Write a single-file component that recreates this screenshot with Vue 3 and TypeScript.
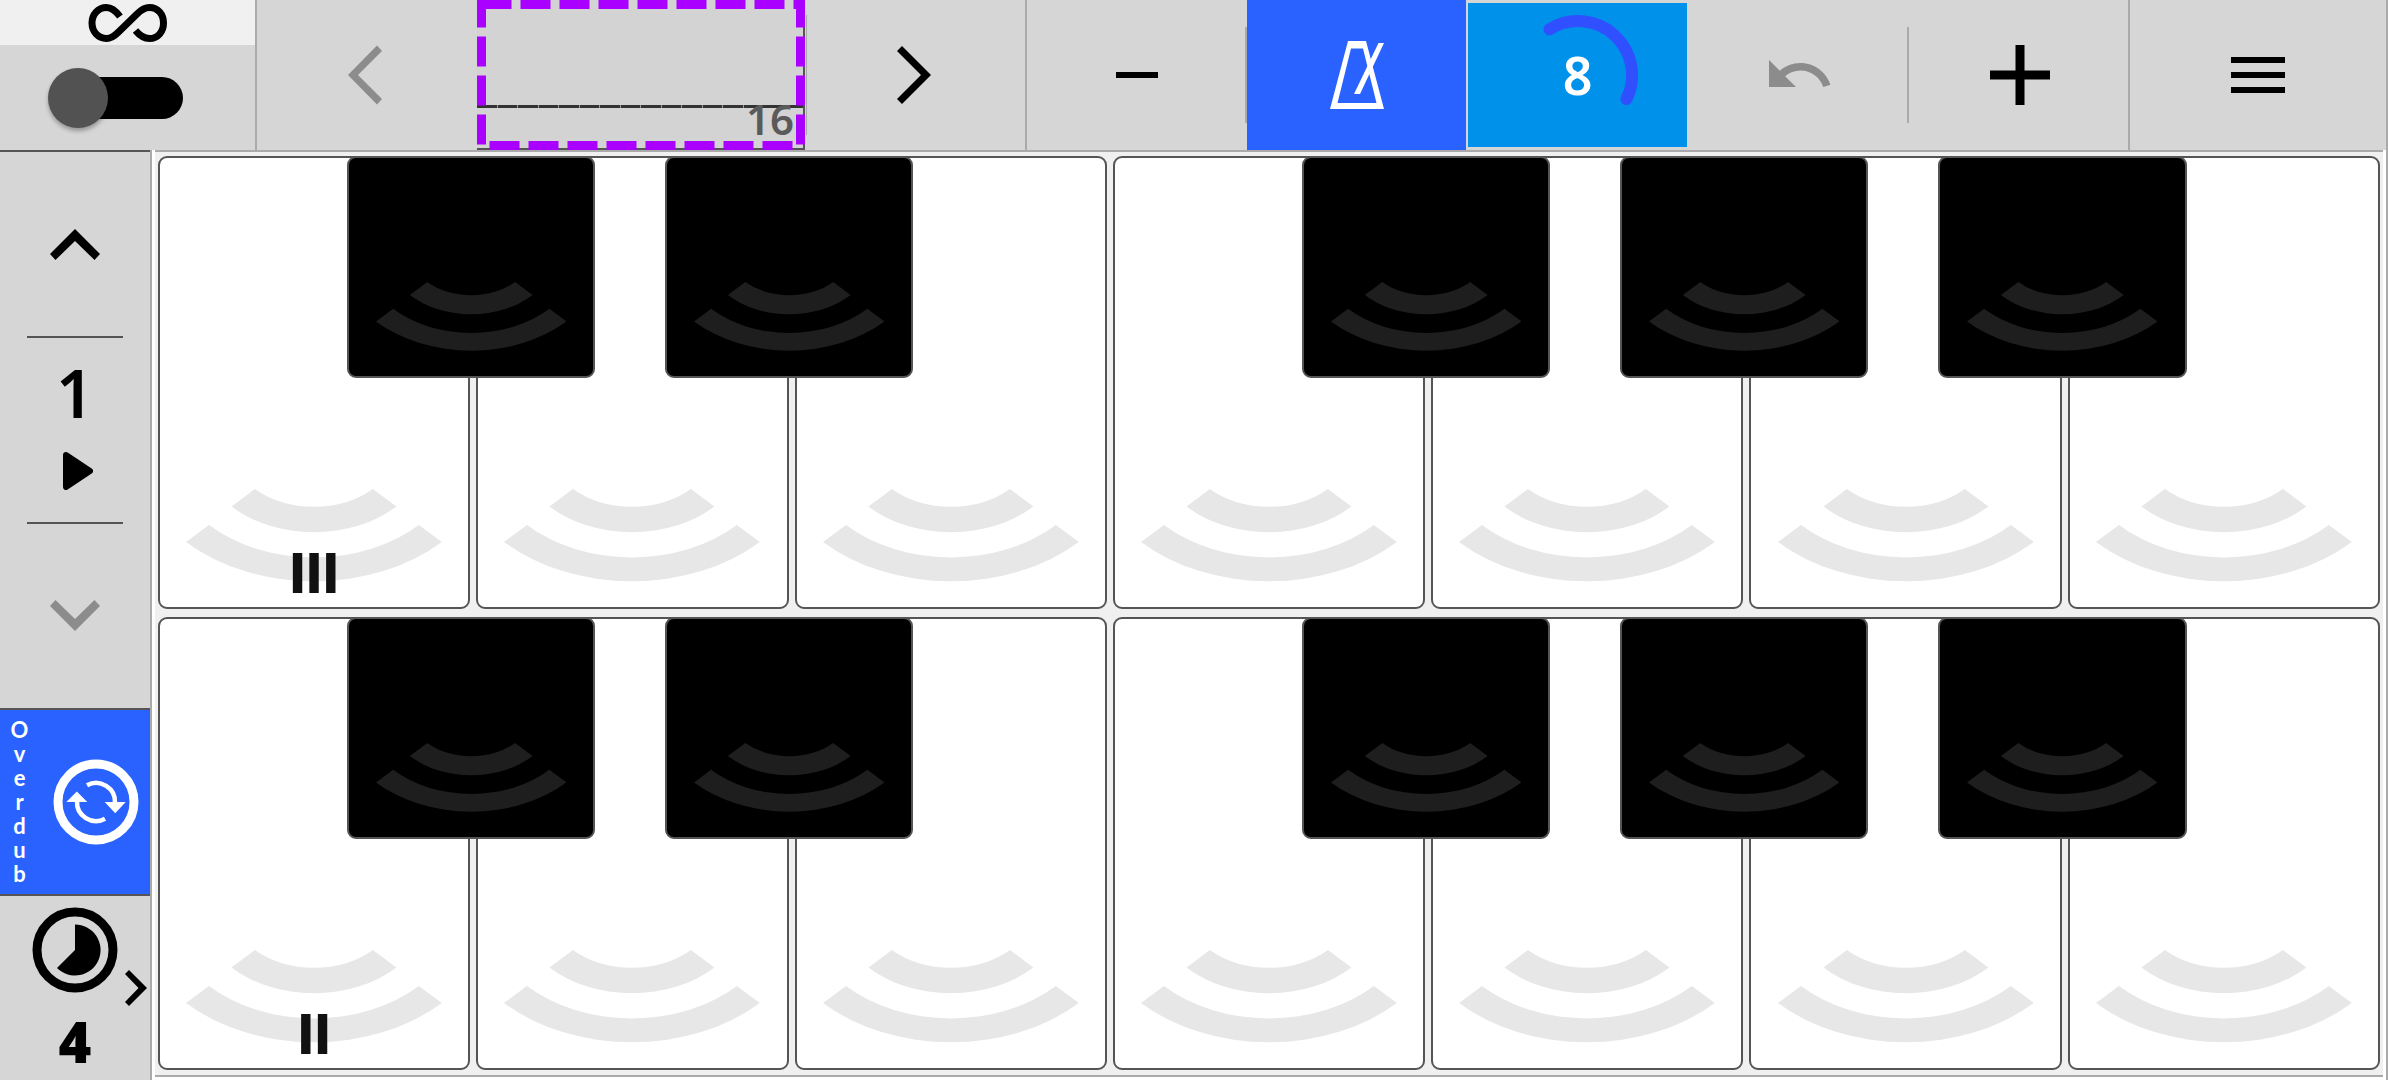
<script setup lang="ts">
import { ref } from 'vue'

interface Key {
  note: string
  sharp: boolean
}

interface Row {
  id: number
  label: string
}

const keys: Key[] = [
  { note: 'C', sharp: true },
  { note: 'D', sharp: true },
  { note: 'E', sharp: false },
  { note: 'F', sharp: true },
  { note: 'G', sharp: true },
  { note: 'A', sharp: true },
  { note: 'B', sharp: false },
]

const rows: Row[] = [
  { id: 2, label: 'III' },
  { id: 1, label: 'II' },
]

const overdub = 'Overdub'
const looping = ref(false)
const page = ref(1)
const steps = ref(16)
const beats = ref(8)
const bars = ref(4)
</script>

<template>
  <div class="app">
    <header class="toolbar">
      <div class="mode">
        <label class="mode-label" for="loop-switch">
          <svg width="80" height="42" viewBox="0 0 80 42" aria-label="Loop">
            <path
              d="M32 14.500 C27.500 8.500 23.500 5.500 18.500 5.500 C10 5.500 4 12.500 4 21 C4 29.500 10 36.500 18.500 36.500 C23 36.500 26 34.500 30 30.500 L49 12 C53 8 57 5.500 61.500 5.500 C70 5.500 75.500 12.500 75.500 21 C75.500 29.500 70 36.500 61.500 36.500 C56 36.500 52 34 47.500 28.500"
              fill="none"
              stroke="#000"
              stroke-width="7"
            />
          </svg>
        </label>
        <div class="mode-switch">
          <input id="loop-switch" v-model="looping" class="switch" type="checkbox" />
        </div>
      </div>

      <button class="tool" type="button" aria-label="Previous">
        <svg width="38" height="60" viewBox="0 0 38 60">
          <path d="M0 30 29 .5 34 6 10 30 34 54 29 59.500z" fill="#8c8c8c" />
        </svg>
      </button>

      <div class="display">
        <div class="timeline"><span class="ticks"></span></div>
        <span class="steps">{{ steps }}</span>
        <svg class="selection" aria-hidden="true">
          <rect x="4.500" y="4.500" />
        </svg>
      </div>

      <button class="tool next" type="button" aria-label="Next">
        <svg width="40" height="60" viewBox="0 0 40 60">
          <path d="M34 30 5 1 0 6 24 30 0 54 5 59z" />
        </svg>
      </button>

      <button class="tool short-rule" type="button" aria-label="Decrease">
        <svg width="72" height="72" viewBox="0 0 24 24"><path d="M5 11h14v2H5z" /></svg>
      </button>

      <button class="tool metronome" type="button" aria-label="Metronome">
        <svg width="54" height="68" viewBox="0 0 54 68">
          <path
            d="M18 0H36L54 68H0zM21 7.500 7.500 62H46.500L33 7.500z"
            fill="#fff"
            fill-rule="evenodd"
          />
          <path d="M48.500 2H54L30 53H24z" fill="#fff" />
        </svg>
      </button>

      <button class="tool beats" type="button" aria-label="Beats">
        <svg class="progress" width="120" height="120" viewBox="0 0 120 120">
          <path
            d="M31.500 14.300A54 54 0 0 1 108.500 84"
            fill="none"
            stroke="#3050ff"
            stroke-width="12"
            stroke-linecap="round"
          />
        </svg>
        <span>{{ beats }}</span>
      </button>

      <button class="tool short-rule" type="button" aria-label="Undo">
        <svg width="72" height="72" viewBox="0 0 24 24">
          <path
            fill="#8c8c8c"
            d="M12.500 8c-2.650 0-5.050.990-6.900 2.600L2 7v9h9l-3.620-3.620c1.390-1.160 3.160-1.880 5.120-1.880 3.540 0 6.550 2.310 7.600 5.500l2.370-.780C21.080 11.030 17.150 8 12.500 8z"
          />
        </svg>
      </button>

      <button class="tool full-rule" type="button" aria-label="Add">
        <svg width="60" height="60" viewBox="0 0 60 60">
          <path d="M25.500 0h9v25.500H60v9H34.500V60h-9V34.500H0v-9h25.500z" />
        </svg>
      </button>

      <button class="tool" type="button" aria-label="Menu">
        <svg width="72" height="72" viewBox="0 0 24 24">
          <path d="M3 18h18v-2H3v2zm0-5h18v-2H3v2zm0-7v2h18V6H3z" />
        </svg>
      </button>
    </header>

    <main class="body">
      <aside class="side">
        <button class="cell boxed" type="button" aria-label="Page up">
          <svg width="50" height="31" viewBox="0 0 50 31">
            <path d="M25 0 50 25 44.500 31 25 12 5.500 31 0 25z" />
          </svg>
        </button>

        <button class="cell ruled pager" type="button">
          <span class="page">{{ page }}</span>
          <svg class="play" width="30" height="38" viewBox="0 0 30 38">
            <path d="M3 3 27 19 3 35z" stroke="#000" stroke-width="6" stroke-linejoin="round" />
          </svg>
        </button>

        <button class="cell ruled" type="button" aria-label="Page down">
          <svg width="50" height="31" viewBox="0 0 50 31">
            <path d="M25 31 50 6 44.500 0 25 19 5.500 0 0 6z" fill="#8c8c8c" />
          </svg>
        </button>

        <button class="cell boxed overdub" type="button" :aria-label="overdub">
          <span class="letters">
            <span v-for="(letter, i) in overdub" :key="i">{{ letter }}</span>
          </span>
          <svg width="86" height="86" viewBox="-43 -43 86 86">
            <circle r="38" fill="none" stroke="#fff" stroke-width="9" />
            <g fill="none" stroke="#fff" stroke-width="4.500">
              <path d="M-9 -16.700A19 19 0 0 1 19 1" />
              <path d="M9 16.700A19 19 0 0 1 -19 -1" />
            </g>
            <path d="M8.700 0H29.700L19.200 11.300z M-8.700 0H-29.700L-19.200 -10.500z" fill="#fff" />
          </svg>
        </button>

        <button class="cell boxed bars" type="button">
          <svg width="86" height="86" viewBox="-43 -43 86 86">
            <circle r="38" fill="none" stroke="#000" stroke-width="9" />
            <path d="M0 0V-25.500A25.500 25.500 0 1 1 -18 18z" />
          </svg>
          <span class="bar-count">{{ bars }}</span>
          <svg class="more" width="22" height="36" viewBox="0 0 22 36">
            <path d="M22 18 4 0 0 4 13.500 18 0 32 4 36z" />
          </svg>
        </button>
      </aside>

      <section class="keyboard">
        <div v-for="row in rows" :key="row.id" class="octave">
          <div v-for="(key, i) in keys" :key="key.note" class="slot">
            <button class="key white" type="button" :aria-label="key.note + row.id">
              <svg class="waves" viewBox="0 0 256 94">
                <path
                  d="M45.500 17.500 69 0A83 60 0 0 0 187 0L210.500 17.500A115 85 0 0 1 45.500 17.500z M0 53 23 36A148 110 0 0 0 233 36L256 53A181 135 0 0 1 0 53z"
                  fill="#e7e7e7"
                />
              </svg>
              <span v-if="i === 0" class="degree">{{ row.label }}</span>
            </button>
            <button
              v-if="key.sharp"
              class="key black"
              type="button"
              :aria-label="key.note + '#' + row.id"
            >
              <svg class="waves" viewBox="0 0 256 94">
                <path
                  d="M45.500 17.500 69 0A83 60 0 0 0 187 0L210.500 17.500A115 85 0 0 1 45.500 17.500z M0 53 23 36A148 110 0 0 0 233 36L256 53A181 135 0 0 1 0 53z"
                  fill="#1e1e1e"
                />
              </svg>
            </button>
          </div>
        </div>
      </section>
    </main>
  </div>
</template>

<style>
body {
  margin: 0;
  background: #fff;
}
</style>

<style scoped>
.app {
  display: flex;
  flex-direction: column;
  box-sizing: border-box;
  min-height: 100vh;
  border-right: 2px solid #aaa;
  font-family: 'Noto Sans', 'Open Sans', sans-serif;
  color: #000;
}

button {
  box-sizing: border-box;
  margin: 0;
  padding: 0;
  border: 0;
  background: none;
  color: inherit;
  font: inherit;
}

svg {
  display: block;
  flex: none;
}

.toolbar {
  display: grid;
  grid-template-columns: 257px 220fr 329fr 221fr 220fr 221fr 220fr 221fr 221fr 256px;
  height: 150px;
  background: #d6d6d6;
}

.mode {
  display: flex;
  flex-direction: column;
  border-right: 2px solid #aaa;
}

.mode-label {
  display: flex;
  align-items: center;
  justify-content: center;
  height: 45px;
  background: #f0f0f0;
}

.mode-switch {
  flex: 1;
  display: flex;
  align-items: center;
  padding-left: 48px;
}

.switch {
  appearance: none;
  position: relative;
  display: flex;
  align-items: center;
  width: 135px;
  height: 60px;
  margin: 0;
}

.switch::before {
  content: '';
  position: absolute;
  inset: 9px 0 9px 24px;
  border-radius: 21px;
  background: #000;
}

.switch::after {
  content: '';
  position: relative;
  width: 60px;
  height: 60px;
  border-radius: 50%;
  background: #525252;
  box-shadow: 0 3px 4px rgba(0, 0, 0, 0.3);
}

.switch:checked::after {
  margin-left: auto;
}

.tool {
  display: flex;
  align-items: center;
  justify-content: center;
}

.short-rule {
  background: linear-gradient(#aaa, #aaa) right center / 2px 96px no-repeat;
}

.full-rule {
  background: linear-gradient(#aaa, #aaa) right center / 2px 100% no-repeat;
}

.next {
  background:
    linear-gradient(#aaa, #aaa) right center / 2px 100% no-repeat,
    linear-gradient(#aaa, #aaa) left center / 1px 120px no-repeat;
}

.display {
  position: relative;
  display: flex;
  flex-direction: column;
  box-sizing: border-box;
  margin-right: 1px;
  padding-top: 105px;
  border-right: 2px solid #555;
  border-bottom: 2px solid #555;
  background: #d3d3d3;
}

.timeline {
  height: 3px;
  background: #333;
}

.ticks {
  display: block;
  width: 82%;
  height: 3px;
  background: repeating-linear-gradient(
    90deg,
    transparent 0,
    transparent calc(100% / 13 - 1px),
    #999 calc(100% / 13 - 1px),
    #999 calc(100% / 13)
  );
}

.steps {
  align-self: flex-end;
  margin: -10px 9px 0 0;
  font-size: 42px;
  font-weight: 600;
  line-height: 42px;
  color: #5a5a5a;
}

.selection {
  position: absolute;
  top: 0;
  left: 0;
  width: calc(100% + 2px);
  height: 150px;
}

.selection rect {
  width: calc(100% - 9px);
  height: 141px;
  fill: none;
  stroke: #a0f;
  stroke-width: 9px;
  stroke-dasharray: 30 9;
}

.metronome {
  margin-right: 2px;
  background: #2962ff;
}

.beats {
  position: relative;
  margin: 3px 1px 3px 0;
  background: #0091ea;
  color: #fff;
  font-size: 52px;
  font-weight: 600;
  line-height: 52px;
}

.progress {
  position: absolute;
  inset: 0;
  margin: auto;
}

.body {
  flex: 1;
  display: grid;
  grid-template-columns: 152px 1fr;
}

.side {
  display: grid;
  grid-template-rows: repeat(5, 1fr);
  border-right: 2px solid #aaa;
  background: #d6d6d6;
}

.cell {
  display: flex;
  align-items: center;
  justify-content: center;
}

.boxed {
  border-top: 2px solid #555;
}

.ruled {
  background: linear-gradient(#555, #555) center top / 96px 2px no-repeat;
}

.pager {
  flex-direction: column;
  gap: 36px;
}

.page {
  font-size: 66px;
  font-weight: 600;
  line-height: 48px;
}

.play {
  margin-left: 6px;
}

.overdub {
  gap: 14px;
  justify-content: flex-start;
  background: #2962ff;
  color: #fff;
}

.letters {
  display: flex;
  flex-direction: column;
  width: 39px;
  font-family: Lato, 'Open Sans', sans-serif;
  font-size: 22px;
  font-weight: 700;
  line-height: 24px;
  text-align: center;
}

.bars {
  position: relative;
  flex-direction: column;
  justify-content: flex-start;
  gap: 20px;
  padding-top: 11px;
}

.bar-count {
  font-size: 56px;
  font-weight: 900;
  line-height: 56px;
}

.more {
  position: absolute;
  top: 74px;
  right: 3px;
}

.keyboard {
  display: grid;
  grid-template-rows: 1fr 1fr;
  gap: 8px;
  margin: 0 3px 3px;
  padding: 4px 3px 5px;
  border-top: 2px solid #aaa;
  border-bottom: 2px solid #aaa;
  background: #f0f0f0;
}

.octave {
  display: grid;
  grid-template-columns: repeat(7, 1fr);
  gap: 6px;
}

.slot {
  position: relative;
  display: flex;
}

.key {
  display: flex;
  align-items: flex-end;
  justify-content: center;
  padding-bottom: 24px;
  border: 2px solid #555;
  border-radius: 9px;
}

.white {
  position: relative;
  flex: 1;
  background: #fff;
}

.white .waves {
  width: 83%;
}

.black {
  position: absolute;
  z-index: 1;
  top: 0;
  left: 60.5%;
  width: 79.5%;
  height: 49%;
  background: #000;
}

.black .waves {
  width: 78%;
}

.degree {
  position: absolute;
  right: 0;
  bottom: 6px;
  left: 0;
  font-family: Roboto, 'Open Sans', sans-serif;
  font-size: 55px;
  font-weight: 900;
  line-height: 54px;
  color: #111;
  text-align: center;
}
</style>
